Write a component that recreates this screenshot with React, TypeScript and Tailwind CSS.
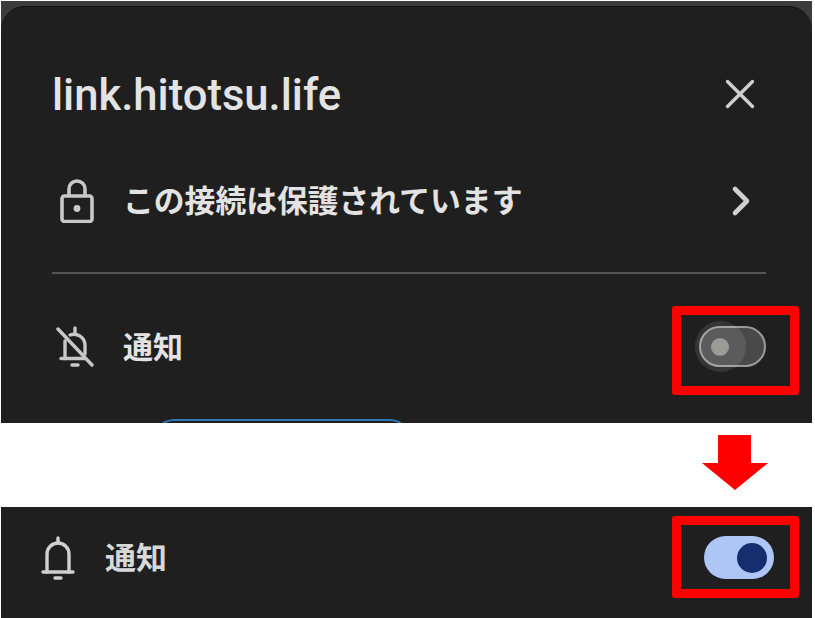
import { ChevronRight, X } from "lucide-react";

const font = "font-['Roboto','Noto_Sans_CJK_JP',sans-serif]";

function RedBox({ className }: { className: string }) {
  return <div className={`absolute border-[9px] border-[#ff0000] rounded-[3px] ${className}`} />;
}

function LockIcon() {
  return (
    <svg viewBox="0 0 34 44" className="w-[34px] h-[44px] ml-[8px] text-[#c8c8c8]" fill="none" stroke="currentColor" strokeWidth="3.6">
      <path d="M9 17V10a8 8 0 0 1 16 0v7" />
      <rect x="2" y="17" width="30" height="25.5" rx="2.5" />
      <circle cx="17" cy="29.5" r="3.4" fill="currentColor" stroke="none" />
    </svg>
  );
}

function BellOffIcon() {
  return (
    <svg viewBox="0 0 38 41" className="w-[38px] h-[41px] ml-[4px] text-[#c8c8c8]" fill="none" stroke="currentColor" strokeWidth="3.4" strokeLinecap="round">
      <path d="M2 3l34 36" />
      <path d="M5 32.5h24" />
      <path d="M9 15v17.5" />
      <path d="M14 9a11 11 0 0 1 15 10v9" />
      <path d="M19 2v4" />
      <path d="M16 39h6" />
    </svg>
  );
}

function BellIcon() {
  return (
    <svg viewBox="0 0 34 44" className="w-[34px] h-[44px] text-[#d0d0d0]" fill="none" stroke="currentColor" strokeWidth="3.4" strokeLinecap="round">
      <path d="M2 36h30" />
      <path d="M6 36V18a11 11 0 0 1 22 0v18" />
      <path d="M17 2v5" />
      <path d="M14 42h6" />
    </svg>
  );
}

export default function App() {
  return (
    <div className={`w-[815px] h-[618px] bg-white overflow-hidden ${font}`}>
      {/* before */}
      <div className="w-[811px] ml-px mt-px h-[422px] bg-[#3c3c3c] overflow-hidden">
        <div className="h-full mt-[5px] border-t border-[#111] rounded-t-[24px] bg-[#1f1f1f] pl-[51px] pr-[46px] pt-[57px]">
          <div className="h-[60px] flex items-center justify-between">
            <h1 className="text-[43.6px] pt-[3px] font-medium text-[#e3e3e3]">link.hitotsu.life</h1>
            <X className="w-[50px] h-[50px] mr-[1px] text-[#d0d0d0]" strokeWidth={1.6} />
          </div>
          <div className="h-[60px] mt-[47px] flex items-center">
            <LockIcon />
            <span className="ml-[29px] pt-[3px] flex-1 text-[30.8px] font-bold text-[#e3e3e3]">この接続は保護されています</span>
            <ChevronRight className="w-[48px] h-[48px] mr-[1px] text-[#d0d0d0]" strokeWidth={2.3} />
          </div>
          <div className="h-[2px] mt-[41px] bg-[#555]" />
          <div className="h-[145px] flex items-center justify-between">
            <div className="flex items-center">
              <BellOffIcon />
              <span className="ml-[29px] pt-[2px] text-[30px] font-bold text-[#e3e3e3]">通知</span>
            </div>
            <div className="relative w-[67px] h-[41px] rounded-full bg-[#484948] border-2 border-[#9a9a9a] flex items-center">
              <div className="absolute left-[-6px] top-[-7px] w-[51px] h-[51px] rounded-full bg-white/10" />
              <div className="ml-[10px] w-[18px] h-[18px] rounded-full bg-[#9a9c98] relative" />
              <RedBox className="-left-[29px] -right-[35px] -top-[22px] -bottom-[30px]" />
            </div>
          </div>
          <div className="ml-[102px] w-[256px] h-[20px] border-2 border-[#2f78b8] rounded-t-[30px]" />
        </div>
      </div>
      {/* arrow */}
      <div className="h-[84px] pb-[5px] flex items-center justify-end pr-[47px]">
        <svg viewBox="0 0 66 55" className="w-[66px] h-[55px]">
          <path d="M16 0h33v28h17L33 55 0 28h16z" fill="#ff0000" />
        </svg>
      </div>
      {/* after */}
      <div className="w-[811px] ml-px h-[111px] bg-[#1f1f1f] flex items-center justify-between pl-[40px] pr-[38px] pb-[10px]">
        <div className="flex items-center">
          <BellIcon />
          <span className="ml-[30px] pt-[3px] text-[31px] font-bold text-[#d8d8d8]">通知</span>
        </div>
        <div className="relative w-[70px] h-[43px] rounded-full bg-[#aec6f6] flex items-center justify-end pr-[7px]">
          <div className="w-[30px] h-[30px] rounded-full bg-[#152f6e]" />
          <RedBox className="-left-[32px] -right-[25px] -top-[20px] -bottom-[19px]" />
        </div>
      </div>
    </div>
  );
}
